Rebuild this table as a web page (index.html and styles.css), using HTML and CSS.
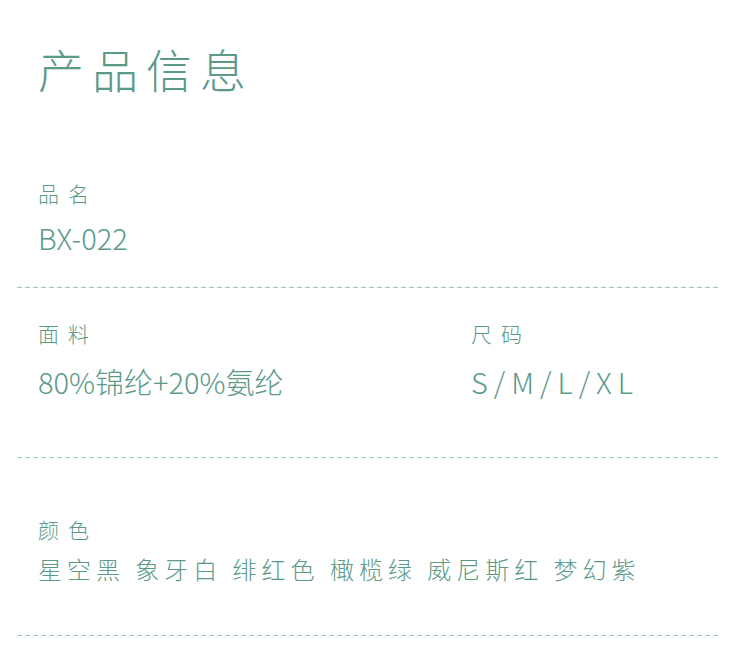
FILE: index.html
```html
<!DOCTYPE html>
<html lang="zh">
<head>
<meta charset="utf-8">
<link rel="stylesheet" href="styles.css">
</head>
<body>
<div class="page">
  <section class="block block-name">
    <h1 class="title">产品信息</h1>
    <div class="field">
      <div class="label">品名</div>
      <div class="value">BX-022</div>
    </div>
  </section>
  <section class="block block-two">
    <div class="field col">
      <div class="label">面料</div>
      <div class="value">80%锦纶+20%氨纶</div>
    </div>
    <div class="field col">
      <div class="label">尺码</div>
      <div class="value sizes">S/M/L/XL</div>
    </div>
  </section>
  <section class="block block-color">
    <div class="field">
      <div class="label">颜色</div>
      <div class="value colors">星空黑 象牙白 绯红色 橄榄绿 威尼斯红 梦幻紫</div>
    </div>
  </section>
</div>
</body>
</html>
```
FILE: styles.css
```css
html, body {
  margin: 0;
  padding: 0;
  background: #ffffff;
}
body {
  font-family: "Noto Sans CJK SC", "Noto Sans", sans-serif;
  font-weight: 300;
  color: #5c9a88;
}
.page {
  width: 703px;
  margin-left: 17px;
}
.block {
  padding-left: 21px;
  background-image: linear-gradient(to right, #9fc6ba 5px, transparent 5px);
  background-size: 8px 1px;
  background-repeat: repeat-x;
  background-position: left bottom;
}
.title {
  margin: 0;
  padding-top: 40px;
  font-size: 46px;
  font-weight: 300;
  line-height: 56px;
  letter-spacing: 8px;
}
.label {
  font-size: 21px;
  line-height: 30px;
  letter-spacing: 9px;
}
.value {
  font-size: 29px;
  line-height: 38px;
}
.block-name .field {
  padding-top: 82px;
}
.block-name .value {
  margin-top: 10px;
}
.block-name {
  padding-bottom: 32px;
}
.block-two {
  display: grid;
  grid-template-columns: 433px 1fr;
  padding-top: 30px;
  padding-bottom: 58px;
}
.block-two .value {
  margin-top: 14px;
}
.sizes {
  letter-spacing: 6px;
}
.block-color {
  padding-top: 56px;
  padding-bottom: 50px;
}
.colors {
  font-size: 24px;
  line-height: 34px;
  letter-spacing: 5px;
  margin-top: 8px;
}
```
